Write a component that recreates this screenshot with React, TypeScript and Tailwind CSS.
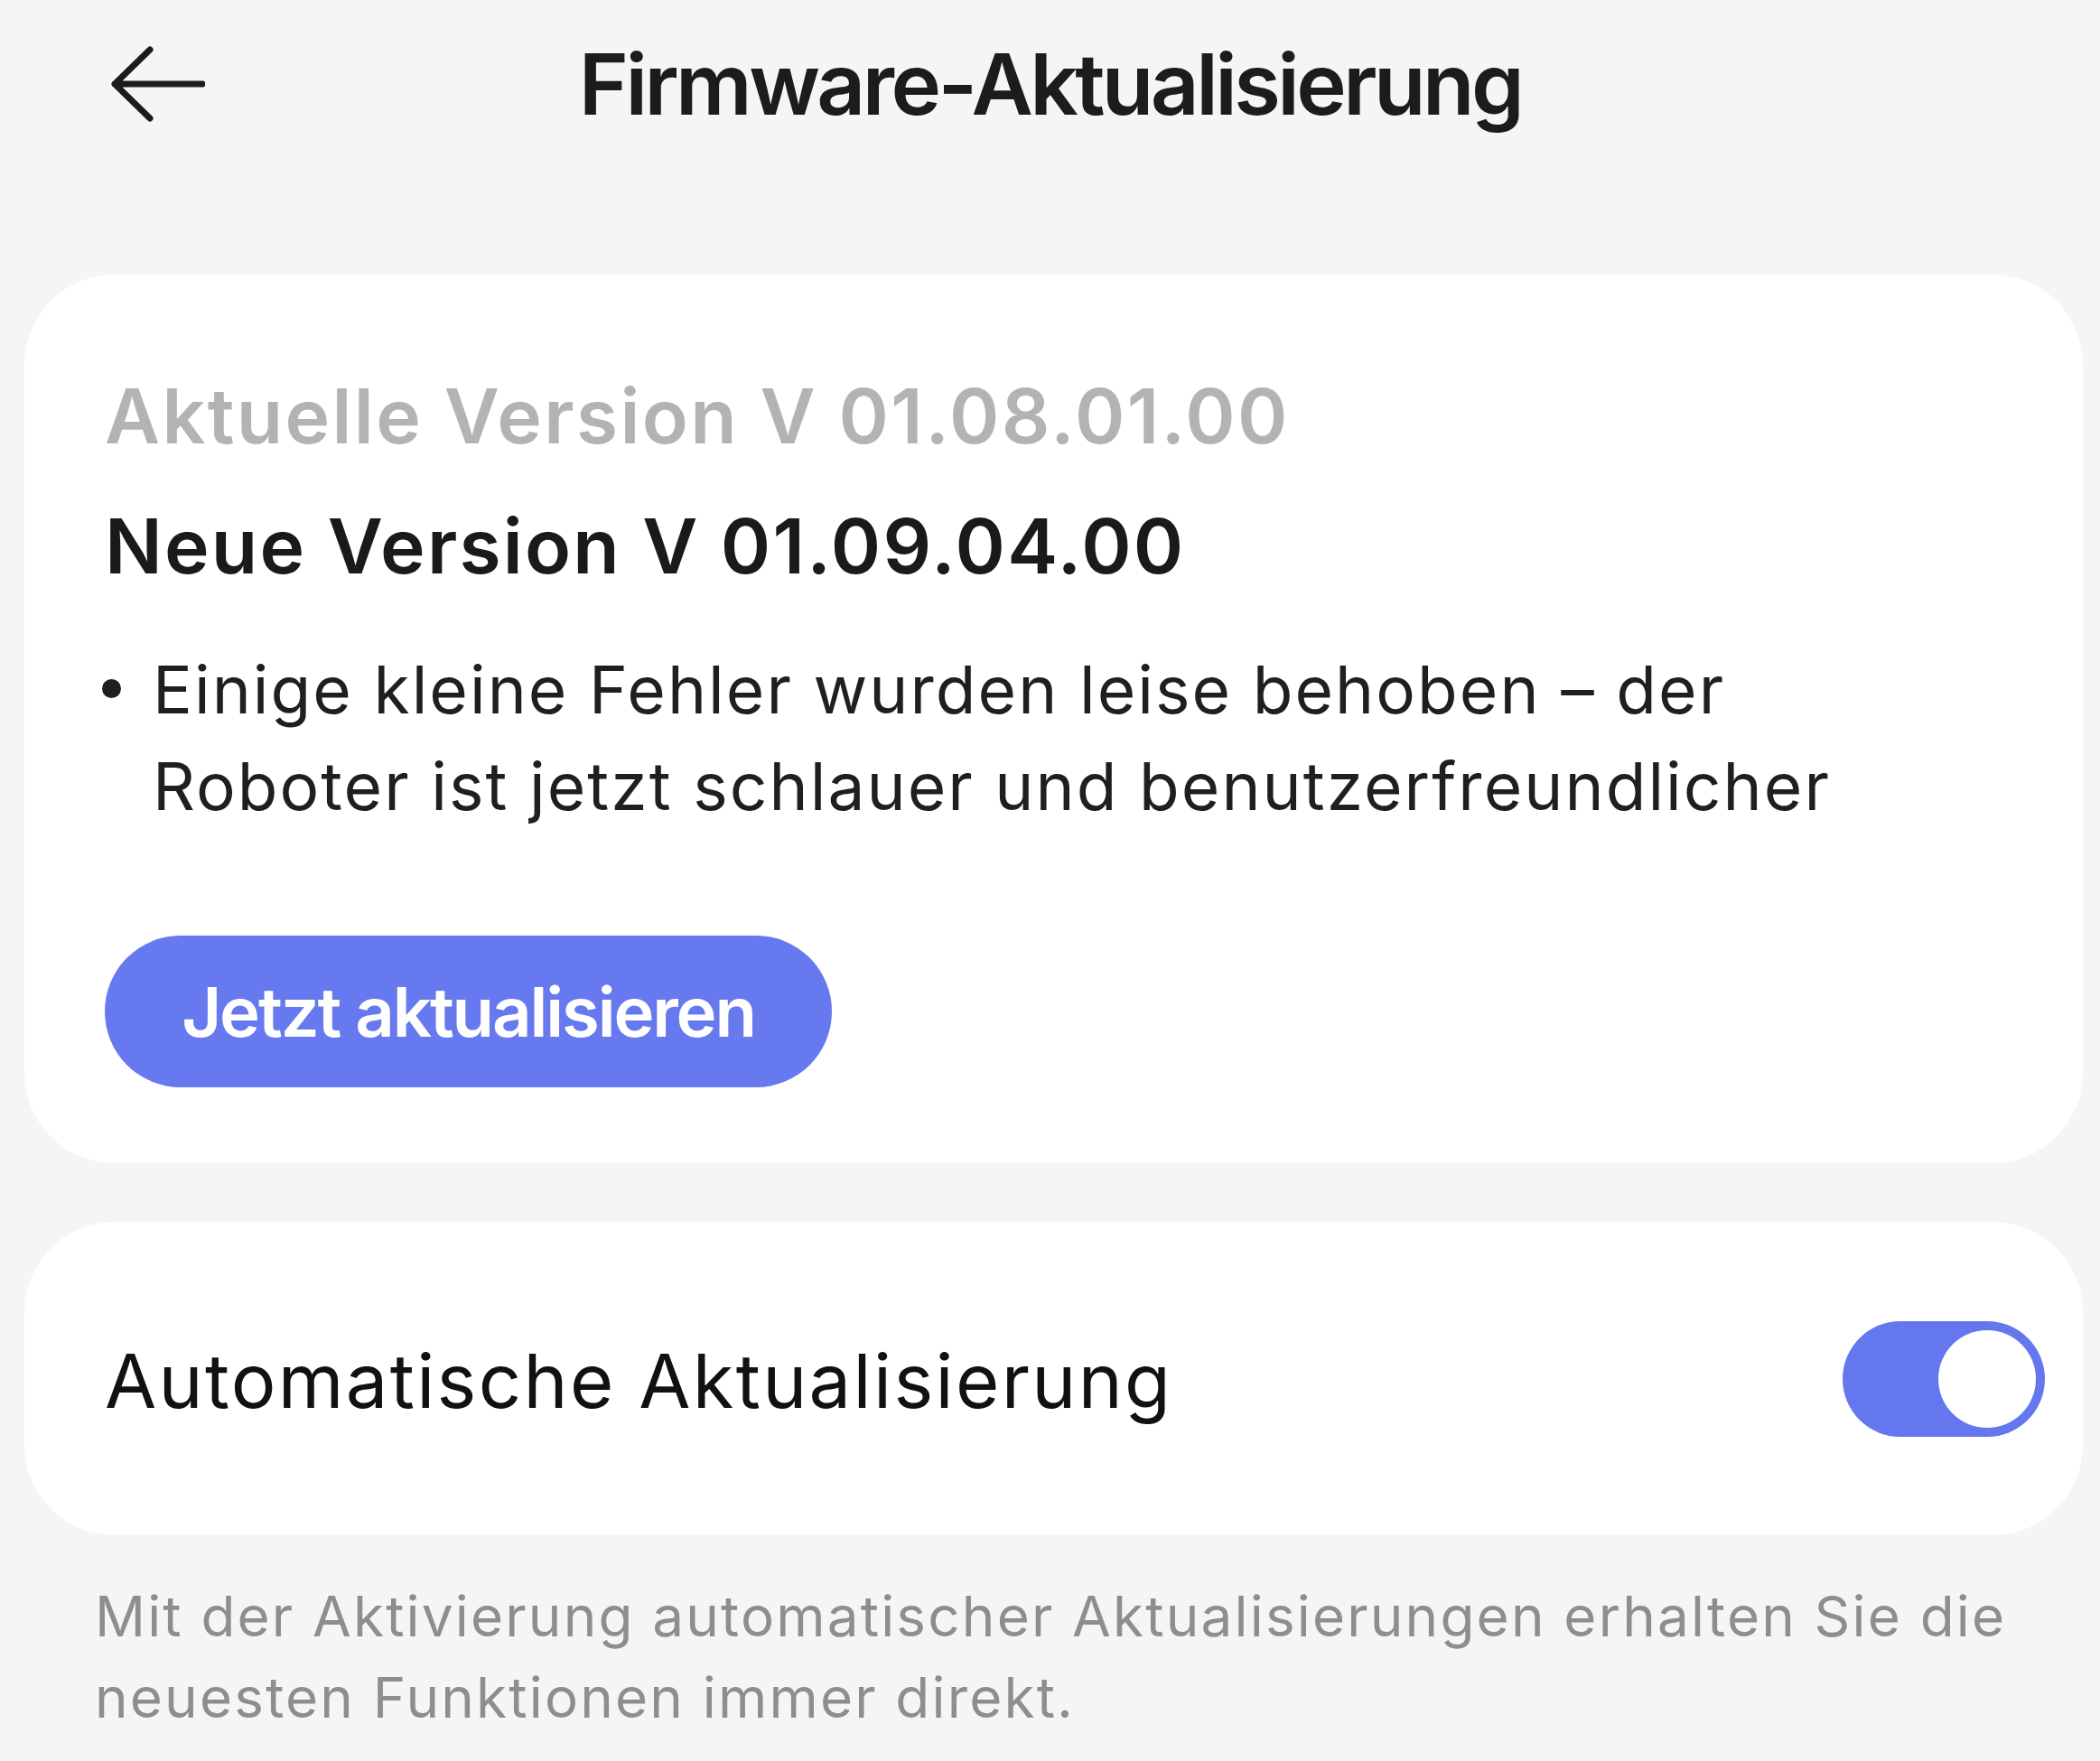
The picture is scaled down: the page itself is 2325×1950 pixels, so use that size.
import React from 'react';

function BackArrow() {
  return (
    <svg width="104" height="84" viewBox="0 0 104 84" fill="none" className="block">
      <path
        d="M43 4 L4 42 L43 80 M4 42 H101"
        stroke="#1c1c1c"
        strokeWidth="7"
        strokeLinecap="round"
        strokeLinejoin="round"
      />
    </svg>
  );
}

function Toggle({ on }: { on: boolean }) {
  return (
    <div
      className={
        'w-[224px] h-[128px] rounded-full p-[10px] flex items-center ' +
        (on ? 'bg-[#6577ee] justify-end' : 'bg-[#d9d9d9] justify-start')
      }
    >
      <div className="w-[108px] h-[108px] rounded-full bg-white" />
    </div>
  );
}

export default function App() {
  return (
    <div className="min-h-[1950px] w-full bg-[#f5f5f5] font-['Inter',sans-serif] text-[#1a1a1a]">
      {/* Kopfzeile */}
      <header className="h-[186px] grid grid-cols-[1fr_auto_1fr] items-center">
        <div className="pl-[123px]">
          <BackArrow />
        </div>
        <h1 className="text-[94px] leading-none font-semibold tracking-[-0.038em] text-[#1c1c1c]">
          Firmware-Aktualisierung
        </h1>
        <div />
      </header>

      {/* Versionskarte */}
      <section className="mt-[118px] ml-[27px] mr-[19px] bg-white rounded-[100px] pl-[89px] pr-[60px] pt-[107px] pb-[84px]">
        <div className="text-[84px] leading-[100px] font-semibold tracking-[0.028em] text-[#b3b3b3]">
          Aktuelle Version V 01.08.01.00
        </div>
        <div className="mt-[44px] text-[84px] leading-[100px] font-semibold tracking-[0.026em] text-[#1a1a1a]">
          Neue Version V 01.09.04.00
        </div>
        <div className="mt-[55px] flex text-[73px] leading-[107px] tracking-[0.028em] text-[#1f1f1f]">
          <span className="w-[53px] shrink-0 pl-[-0px]">
            <span className="block mt-[42px] -ml-[3px] w-[21px] h-[21px] rounded-full bg-[#1f1f1f]" />
          </span>
          <span>
            Einige kleine Fehler wurden leise behoben – der
            <br />
            Roboter ist jetzt schlauer und benutzerfreundlicher
          </span>
        </div>
        <button className="mt-[112px] w-[805px] h-[168px] rounded-full bg-[#6679ee] text-white text-[76px] font-semibold tracking-[-0.028em] leading-none flex items-center justify-center">
          Jetzt aktualisieren
        </button>
      </section>

      {/* Automatische Aktualisierung */}
      <section className="mt-[65px] ml-[27px] mr-[19px] h-[347px] bg-white rounded-[100px] pl-[89px] pr-[42px] flex items-center justify-between">
        <span className="text-[83px] leading-none tracking-[0.028em] mt-[6px] text-[#111]">
          Automatische Aktualisierung
        </span>
        <Toggle on />
      </section>

      <p className="mt-[45px] pl-[105px] pr-[40px] text-[62px] leading-[90px] tracking-[0.035em] text-[#8e8e8e]">
        Mit der Aktivierung automatischer Aktualisierungen erhalten Sie die
        <br />
        neuesten Funktionen immer direkt.
      </p>
    </div>
  );
}
